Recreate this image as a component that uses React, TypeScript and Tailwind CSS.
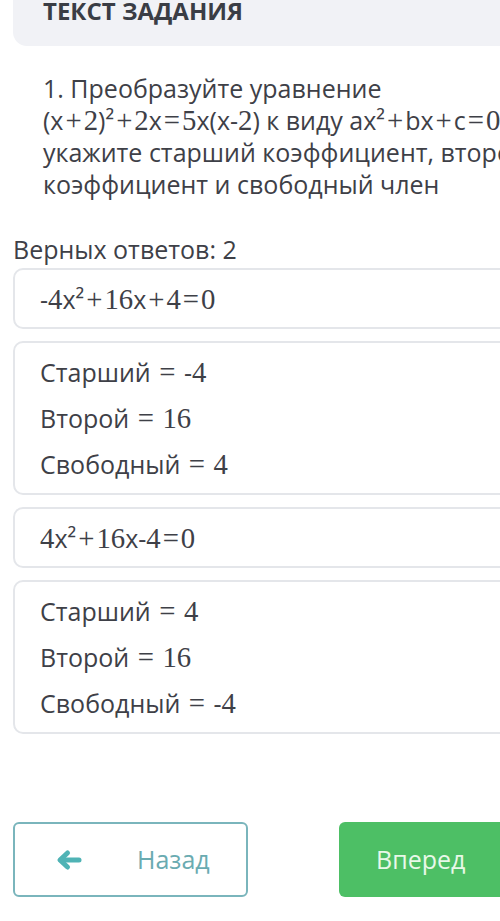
// digits, "+" and "=" come out in the serif math font, the rest stays sans
function MathText({ text }: { text: string }) {
  const parts = text.split(/([0-9]+|[+=])/);
  return (
    <>
      {parts.map((p, i) => {
        if (/^[0-9]+$/.test(p))
          return (
            <span
              key={i}
              className="font-['Liberation_Serif',serif] text-[1.15em] leading-none"
            >
              {p}
            </span>
          );
        if (p === "+" || p === "=")
          return (
            <span
              key={i}
              className="mx-[2px] font-['Liberation_Serif',serif] text-[1.15em] leading-none"
            >
              {p}
            </span>
          );
        return <span key={i}>{p}</span>;
      })}
    </>
  );
}

const answers = [
  {
    equation: "-4x²+16x+4=0",
    lines: ["Старший = -4", "Второй = 16", "Свободный = 4"],
  },
  {
    equation: "4x²+16x-4=0",
    lines: ["Старший = 4", "Второй = 16", "Свободный = -4"],
  },
];

export default function App() {
  return (
    <div className="w-[500px] h-[921px] overflow-hidden bg-white font-['Open_Sans',sans-serif] text-[#3e4047]">
      <div className="w-[587px] px-[13px]">
        {/* Task header */}
        <div className="h-[46px] flex items-start bg-[#f1f2f6] rounded-bl-[14px] pl-[30px]">
          <h2 className="-mt-[3px] text-[24px] leading-[28px] font-bold text-[#3a3d45]">
            ТЕКСТ ЗАДАНИЯ
          </h2>
        </div>

        {/* Question */}
        <p className="mt-[26px] pl-[30px] text-[25px] leading-[32px] whitespace-nowrap">
          1. Преобразуйте уравнение
          <br />
          <MathText text="(x+2)²+2x=5x(x-2)" /> к виду{" "}
          <MathText text="ax²+bx+c=0" /> и
          <br />
          укажите старший коэффициент, второй
          <br />
          коэффициент и свободный член
        </p>

        <div className="mt-[35px] text-[25px] leading-[28px]">
          Верных ответов: 2
        </div>

        {/* Answers */}
        <div className="mt-[5px] flex flex-col gap-[12px]">
          {answers.map((a) => (
            <div key={a.equation} className="flex flex-col gap-[12px]">
              <div className="border-2 border-[#e4e6ea] rounded-[10px] pl-[25px] pt-[6px] pb-[5px] text-[25px] leading-[46px]">
                <MathText text={a.equation} />
              </div>
              <div className="border-2 border-[#e4e6ea] rounded-[10px] pl-[25px] pt-[6px] pb-[6px] text-[25px] leading-[46px]">
                {a.lines.map((l) => (
                  <div key={l}>
                    <MathText text={l} />
                  </div>
                ))}
              </div>
            </div>
          ))}
        </div>

        {/* Navigation */}
        <div className="mt-[88px] flex gap-[91px]">
          <button className="w-[235px] h-[75px] border-2 border-[#7ab5bc] rounded-[6px] flex items-center pl-[41px] text-[25px] text-[#6aabb1]">
            <svg
              width="26"
              height="22"
              viewBox="0 0 26 22"
              fill="none"
              stroke="#4fb3b5"
              strokeWidth="5"
              strokeLinecap="round"
              strokeLinejoin="round"
            >
              <path d="M23 11H5" />
              <path d="M11.5 4L4 11l7.5 7" />
            </svg>
            <span className="ml-[55px]">Назад</span>
          </button>
          <button className="w-[235px] h-[75px] rounded-[6px] bg-[#4dbf65] text-[25px] text-[#e8f8e8] flex items-center pl-[37px]">
            Вперед
          </button>
        </div>
      </div>
    </div>
  );
}
